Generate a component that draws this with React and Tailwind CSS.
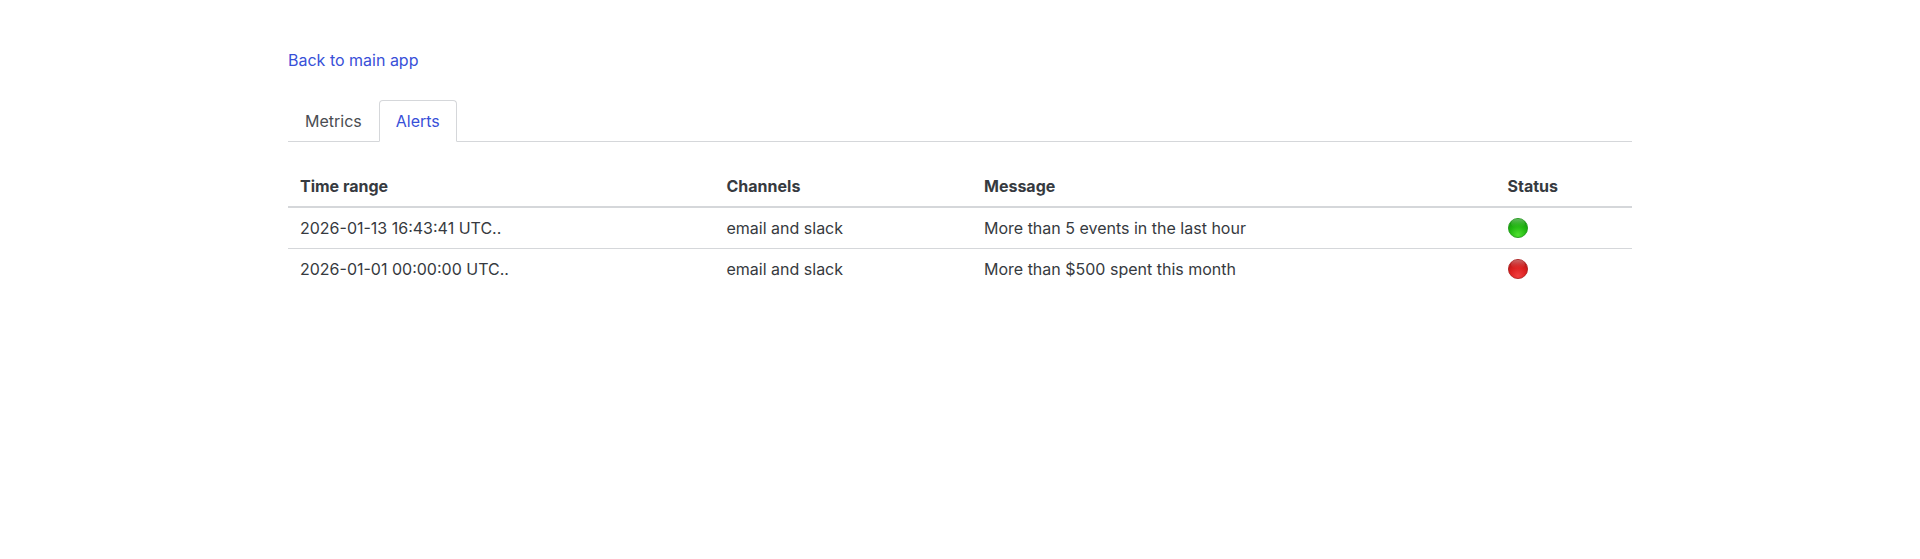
const Ball = ({ id, top, light, mid, dark, edge }) => (
  <svg width="20" height="20" viewBox="0 0 20 20" className="block">
    <defs>
      <radialGradient id={id} cx="0.5" cy="0.85" r="0.8">
        <stop offset="0" stopColor={light} />
        <stop offset="0.55" stopColor={mid} />
        <stop offset="1" stopColor={dark} />
      </radialGradient>
      <linearGradient id={`${id}h`} x1="0" y1="0" x2="0" y2="1">
        <stop offset="0" stopColor="#ffffff" stopOpacity="0.35" />
        <stop offset="1" stopColor={top} stopOpacity="0" />
      </linearGradient>
    </defs>
    <circle cx="10" cy="10" r="9.6" fill={`url(#${id})`} stroke={edge} strokeWidth="0.8" />
    <ellipse cx="10" cy="5.5" rx="7" ry="4.5" fill={`url(#${id}h)`} />
  </svg>
);

const rows = [
  { time: "2026-01-13 16:43:41 UTC..", channels: "email and slack", message: "More than 5 events in the last hour", ok: true },
  { time: "2026-01-01 00:00:00 UTC..", channels: "email and slack", message: "More than $500 spent this month", ok: false },
];

export default function App() {
  return (
    <div className="min-h-[559px] bg-white font-['Inter',sans-serif] text-base leading-6 text-[#363a40] antialiased">
      <div className="mx-auto w-[1344px] pt-12">
        <a href="#" className="block text-[#3850d8]">Back to main app</a>
        <div className="mt-7 flex border-b border-[#d5d7da]">
          <a href="#" className="-mb-px border border-transparent px-4 py-2 text-[#4a4d52]">Metrics</a>
          <a href="#" className="-mb-px rounded-t border border-[#d5d7da] border-b-white px-4 py-2 text-[#3850d8]">Alerts</a>
        </div>
        <table className="mt-6 w-[1344px] table-fixed border-collapse">
          <colgroup>
            <col className="w-[426.5px]" />
            <col className="w-[257.5px]" />
            <col className="w-[523.5px]" />
            <col className="w-[136.5px]" />
          </colgroup>
          <thead>
            <tr className="border-b-2 border-[#d5d7da] text-left">
              <th className="px-3 py-2 font-bold">Time range</th>
              <th className="px-3 py-2 font-bold">Channels</th>
              <th className="px-3 py-2 font-bold">Message</th>
              <th className="px-3 py-2 font-bold">Status</th>
            </tr>
          </thead>
          <tbody>
            {rows.map((r, i) => (
              <tr key={r.time} className={i === 0 ? "border-b border-[#d5d7da]" : ""}>
                <td className="px-3 py-2">{r.time}</td>
                <td className="px-3 py-2">{r.channels}</td>
                <td className="px-3 py-2">{r.message}</td>
                <td className="px-3 py-2">
                  {r.ok ? (
                    <Ball id="g" top="#5fdc4a" light="#4fe030" mid="#22b812" dark="#12950c" edge="#1d9416" />
                  ) : (
                    <Ball id="r" top="#f26a6a" light="#f04040" mid="#dc2020" dark="#b01616" edge="#a81c1c" />
                  )}
                </td>
              </tr>
            ))}
          </tbody>
        </table>
      </div>
    </div>
  );
}
